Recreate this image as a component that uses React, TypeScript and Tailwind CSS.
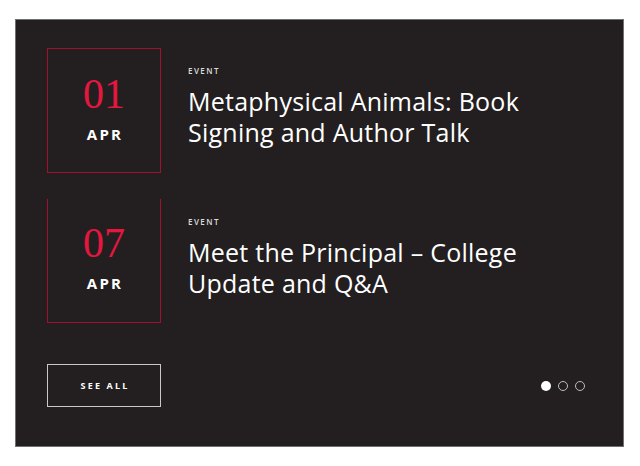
import React from "react";

type Ev = { day: string; title: string[]; noTop?: boolean };

const events: Ev[] = [
  { day: "01", title: ["Metaphysical Animals: Book", "Signing and Author Talk"] },
  { day: "07", title: ["Meet the Principal – College", "Update and Q&A"], noTop: true },
];

function EventRow({ ev }: { ev: Ev }) {
  return (
    <div className="flex">
      <div
        className={
          ev.noTop
            ? "w-[114px] h-[124px] border border-t-0 border-[#a0112f] flex flex-col items-center pt-[19px]"
            : "w-[114px] h-[125px] border border-[#a0112f] flex flex-col items-center pt-[20px]"
        }
      >
        <div className="font-['Liberation_Serif',serif] text-[42px] leading-[50px] text-[#e5173f]">
          {ev.day}
        </div>
        <div className="font-['Open_Sans',sans-serif] font-bold text-[15px] leading-[20px] tracking-[0.15em] text-white mt-[5px] pl-[2px]">
          APR
        </div>
      </div>
      <div className="pl-[27px] pt-[18px]">
        <div className="font-['Open_Sans',sans-serif] font-semibold text-[8px] leading-[10px] tracking-[0.18em] text-[#dcdcdc]">
          EVENT
        </div>
        <div className="font-['Open_Sans',sans-serif] text-[25px] leading-[31px] tracking-[0.01em] text-white mt-[10px]">
          {ev.title.map((t, i) => (
            <div key={i}>{t}</div>
          ))}
        </div>
      </div>
    </div>
  );
}

export default function App() {
  return (
    <div className="w-[640px] h-[466px] bg-white pt-[19px] pl-[15px]">
      <div className="w-[609px] h-[428px] bg-[#231f20] border border-[#707070] pl-[31px] pt-[28px] pr-[38px] flex flex-col">
        <div className="flex flex-col gap-[26px]">
          {events.map((ev, i) => (
            <EventRow key={i} ev={ev} />
          ))}
        </div>
        <div className="flex items-center justify-between mt-[41px]">
          <div className="w-[114px] h-[43px] border border-[#c8c8c8] flex items-center justify-center font-['Open_Sans',sans-serif] font-bold text-[9px] tracking-[0.24em] text-white pl-[2px]">
            SEE ALL
          </div>
          <div className="flex items-center gap-[7px]">
            <span className="w-[10px] h-[10px] rounded-full bg-white" />
            <span className="w-[10px] h-[10px] rounded-full border-[1.5px] border-[#bdbdbd]" />
            <span className="w-[10px] h-[10px] rounded-full border-[1.5px] border-[#bdbdbd]" />
          </div>
        </div>
      </div>
    </div>
  );
}
